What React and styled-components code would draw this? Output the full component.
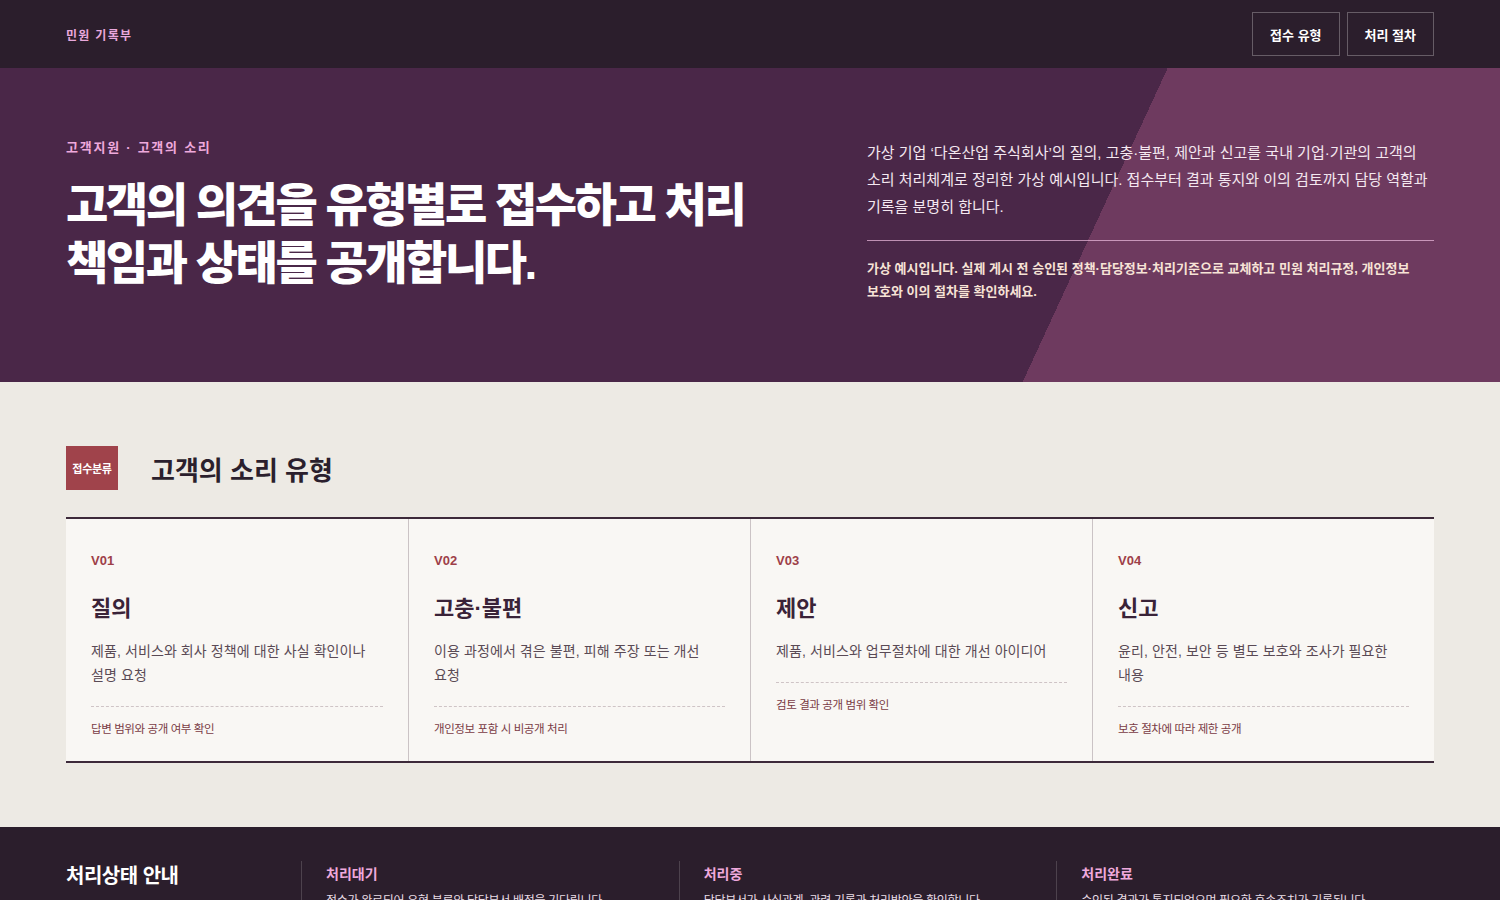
import styled, { createGlobalStyle } from 'styled-components';

const GlobalStyle = createGlobalStyle`
    * { box-sizing: border-box; }
    body {
        margin: 0;
        background: #edeae4;
        font-family: "Liberation Sans", "Noto Sans CJK KR", sans-serif;
        color: #2b1f2d;
        word-break: keep-all;
    }
    h1, h2, h3, p { margin: 0; }
`;

const TYPES = [
    { code: 'V01', title: '질의', desc: '제품, 서비스와 회사 정책에 대한 사실 확인이나 설명 요청', note: '답변 범위와 공개 여부 확인' },
    { code: 'V02', title: '고충·불편', desc: '이용 과정에서 겪은 불편, 피해 주장 또는 개선 요청', note: '개인정보 포함 시 비공개 처리' },
    { code: 'V03', title: '제안', desc: '제품, 서비스와 업무절차에 대한 개선 아이디어', note: '검토 결과 공개 범위 확인' },
    { code: 'V04', title: '신고', desc: '윤리, 안전, 보안 등 별도 보호와 조사가 필요한 내용', note: '보호 절차에 따라 제한 공개' },
];

const STATUS = [
    { title: '처리대기', desc: '접수가 완료되어 유형 분류와 담당부서 배정을 기다립니다.' },
    { title: '처리중', desc: '담당부서가 사실관계, 관련 기록과 처리방안을 확인합니다.' },
    { title: '처리완료', desc: '승인된 결과가 통지되었으며 필요한 후속조치가 기록됩니다.' },
];

export default function App() {
    return (
        <>
            <GlobalStyle />
            <TopBar>
                <Logo>민원 기록부</Logo>
                <Nav>
                    <NavButton>접수 유형</NavButton>
                    <NavButton>처리 절차</NavButton>
                </Nav>
            </TopBar>

            <Hero>
                <div>
                    <Eyebrow>고객지원 · 고객의 소리</Eyebrow>
                    <Headline>고객의 의견을 유형별로 접수하고 처리<br />책임과 상태를 공개합니다.</Headline>
                </div>
                <HeroAside>
                    <Lead>
                        가상 기업 ‘다온산업 주식회사’의 질의, 고충·불편, 제안과 신고를 국내 기업·기관의 고객의 소리 처리체계로 정리한 가상 예시입니다. 접수부터 결과 통지와 이의 검토까지 담당 역할과 기록을 분명히 합니다.
                    </Lead>
                    <Notice>
                        가상 예시입니다. 실제 게시 전 승인된 정책·담당정보·처리기준으로 교체하고 민원 처리규정, 개인정보 보호와 이의 절차를 확인하세요.
                    </Notice>
                </HeroAside>
            </Hero>

            <TypesSection>
                <SectionHead>
                    <Badge>접수분류</Badge>
                    <SectionTitle>고객의 소리 유형</SectionTitle>
                </SectionHead>
                <CardGrid>
                    {TYPES.map((t) => (
                        <Card key={t.code}>
                            <Code>{t.code}</Code>
                            <CardTitle>{t.title}</CardTitle>
                            <CardDesc>{t.desc}</CardDesc>
                            <CardNote>{t.note}</CardNote>
                        </Card>
                    ))}
                </CardGrid>
            </TypesSection>

            <StatusBand>
                <StatusTitle>처리상태 안내</StatusTitle>
                {STATUS.map((s) => (
                    <StatusCol key={s.title}>
                        <StatusName>{s.title}</StatusName>
                        <StatusDesc>{s.desc}</StatusDesc>
                    </StatusCol>
                ))}
            </StatusBand>
        </>
    );
}

const TopBar = styled.header`
    height: 68px;
    padding: 0 66px;
    display: flex;
    align-items: center;
    justify-content: space-between;
    background: #2b1e2c;
`;

const Logo = styled.div`
    font-size: 12px;
    font-weight: 700;
    letter-spacing: 1.3px;
    color: #e9a8dc;
`;

const Nav = styled.nav`
    display: flex;
    gap: 7px;
`;

const NavButton = styled.button`
    height: 44px;
    padding: 0 17px;
    background: transparent;
    border: 1px solid rgba(255, 255, 255, 0.28);
    color: #fff;
    font-family: inherit;
    font-size: 13px;
    font-weight: 700;
    cursor: pointer;
`;

const Hero = styled.section`
    display: grid;
    grid-template-columns: 1fr 567px;
    gap: 60px;
    align-items: start;
    padding: 71px 66px 79px;
    background: linear-gradient(114.8deg, #4a2748 1060px, #6e3a5f 1060px);
`;

const Eyebrow = styled.p`
    font-size: 13px;
    line-height: 18px;
    font-weight: 700;
    letter-spacing: 1.75px;
    color: #efa9dc;
`;

const Headline = styled.h1`
    margin-top: 19px;
    font-size: 46px;
    line-height: 58px;
    font-weight: 800;
    letter-spacing: -2.5px;
    color: #fff;
`;

const HeroAside = styled.div`
    color: #f4e8f0;
`;

const Lead = styled.p`
    font-size: 15px;
    line-height: 27px;
    letter-spacing: 0;
    padding-bottom: 20px;
    border-bottom: 1px solid rgba(240, 190, 225, 0.7);
`;

const Notice = styled.p`
    margin-top: 16px;
    font-size: 13px;
    line-height: 23px;
    font-weight: 700;
    letter-spacing: 0;
    color: #f7e3d6;
`;

const TypesSection = styled.section`
    padding: 64px 66px 64px;
`;

const SectionHead = styled.div`
    display: flex;
    align-items: center;
    gap: 33px;
    margin-bottom: 27px;
`;

const Badge = styled.span`
    width: 52px;
    height: 44px;
    display: flex;
    align-items: center;
    justify-content: center;
    background: #a0434b;
    color: #fff;
    font-size: 11px;
    font-weight: 700;
    letter-spacing: -0.3px;
`;

const SectionTitle = styled.h2`
    font-size: 26px;
    font-weight: 700;
    letter-spacing: 0;
    color: #2b1f2d;
`;

const CardGrid = styled.div`
    display: grid;
    grid-template-columns: repeat(4, 1fr);
    border-top: 2px solid #3d2a3a;
    border-bottom: 2px solid #3d2a3a;
    background: #f9f7f4;
`;

const Card = styled.article`
    padding: 33px 25px 23px;
    & + & { border-left: 1px solid #cbc3c5; }
`;

const Code = styled.div`
    font-size: 13px;
    line-height: 18px;
    font-weight: 700;
    color: #9e3f48;
`;

const CardTitle = styled.h3`
    margin-top: 24px;
    font-size: 22px;
    line-height: 29px;
    font-weight: 700;
    letter-spacing: 0;
    color: #3a2338;
`;

const CardDesc = styled.p`
    margin-top: 16px;
    padding-bottom: 19px;
    border-bottom: 1px dashed #cfc4c6;
    font-size: 14px;
    line-height: 24px;
    letter-spacing: 0.1px;
    color: #5a4a55;
`;

const CardNote = styled.p`
    margin-top: 13px;
    font-size: 11.5px;
    line-height: 18px;
    letter-spacing: -0.4px;
    color: #7a3b45;
`;

const StatusBand = styled.footer`
    display: grid;
    grid-template-columns: 235px repeat(3, 1fr);
    padding: 34px 66px 40px;
    background: #2b1e2c;
`;

const StatusTitle = styled.h2`
    padding-top: 1px;
    font-size: 20px;
    line-height: 28px;
    font-weight: 700;
    letter-spacing: -0.5px;
    color: #fff;
`;

const StatusCol = styled.div`
    padding-left: 24px;
    border-left: 1px solid rgba(255, 255, 255, 0.16);
`;

const StatusName = styled.h3`
    padding-top: 4px;
    font-size: 14px;
    line-height: 18px;
    font-weight: 700;
    color: #efa9dc;
`;

const StatusDesc = styled.p`
    margin-top: 8px;
    font-size: 12px;
    line-height: 20px;
    letter-spacing: -0.3px;
    color: #e9dde6;
`;
